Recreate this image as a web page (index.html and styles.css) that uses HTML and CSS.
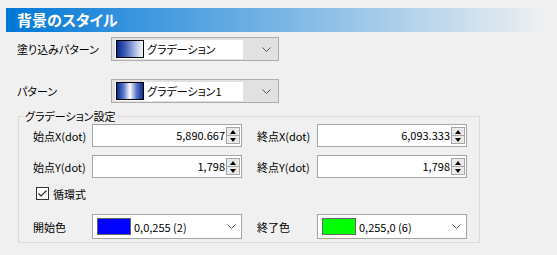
FILE: index.html
```html
<!DOCTYPE html>
<html lang="ja">
<head>
<meta charset="utf-8">
<link rel="stylesheet" href="styles.css">
</head>
<body>
<div class="panel">
  <div class="header">背景のスタイル</div>

  <div class="row r1">
    <span class="lbl top">塗り込みパターン</span>
    <div class="combo gray">
      <div class="item"><span class="sw grad1"></span><span class="itext">グラデーション</span></div>
      <svg class="chev" width="9" height="5" viewBox="0 0 9 5"><polyline points="0.5,0.5 4.5,4.5 8.5,0.5" fill="none" stroke="#555" stroke-width="1"/></svg>
    </div>
  </div>

  <div class="row r2">
    <span class="lbl top">パターン</span>
    <div class="combo gray">
      <div class="item"><span class="sw grad2"></span><span class="itext">グラデーション1</span></div>
      <svg class="chev" width="9" height="5" viewBox="0 0 9 5"><polyline points="0.5,0.5 4.5,4.5 8.5,0.5" fill="none" stroke="#555" stroke-width="1"/></svg>
    </div>
  </div>

  <div class="group">
    <div class="legend">グラデーション設定</div>

    <div class="grow gx">
      <span class="glbl">始点X(dot)</span>
      <div class="num"><span class="val">5,890.667</span><div class="spin"><span class="btn"><i class="up"></i></span><span class="btn"><i class="dn"></i></span></div></div>
      <span class="glbl right">終点X(dot)</span>
      <div class="num"><span class="val">6,093.333</span><div class="spin"><span class="btn"><i class="up"></i></span><span class="btn"><i class="dn"></i></span></div></div>
    </div>

    <div class="grow gy">
      <span class="glbl">始点Y(dot)</span>
      <div class="num"><span class="val">1,798</span><div class="spin"><span class="btn"><i class="up"></i></span><span class="btn"><i class="dn"></i></span></div></div>
      <span class="glbl right">終点Y(dot)</span>
      <div class="num"><span class="val">1,798</span><div class="spin"><span class="btn"><i class="up"></i></span><span class="btn"><i class="dn"></i></span></div></div>
    </div>

    <div class="chkrow">
      <span class="box"><svg width="11" height="11" viewBox="0 0 11 11"><polyline points="1.5,5.5 4,8 9.5,2.5" fill="none" stroke="#222" stroke-width="1.1"/></svg></span>
      <span class="chklbl">循環式</span>
    </div>

    <div class="grow gc">
      <span class="glbl">開始色</span>
      <div class="ccombo">
        <span class="csw blue"></span><span class="ctext">0,0,255 (2)</span>
        <svg class="chev" width="9" height="5" viewBox="0 0 9 5"><polyline points="0.5,0.5 4.5,4.5 8.5,0.5" fill="none" stroke="#555" stroke-width="1"/></svg>
      </div>
      <span class="glbl right">終了色</span>
      <div class="ccombo">
        <span class="csw green"></span><span class="ctext">0,255,0 (6)</span>
        <svg class="chev" width="9" height="5" viewBox="0 0 9 5"><polyline points="0.5,0.5 4.5,4.5 8.5,0.5" fill="none" stroke="#555" stroke-width="1"/></svg>
      </div>
    </div>
  </div>
</div>
</body>
</html>
```

FILE: styles.css
```css
* { box-sizing: border-box; }
html, body {
  margin: 0;
  padding: 0;
  background: #f0f0f0;
  width: 557px;
  height: 255px;
  overflow: hidden;
}
body {
  font-family: "Noto Sans CJK JP", "Noto Sans", sans-serif;
  font-size: 11px;
  color: #000;
  font-feature-settings: "palt";
}
.panel {
  padding: 8px 0 0 6px;
}
.header {
  width: 540px;
  height: 24px;
  background: linear-gradient(to right, #0078d7 0%, #f0f0f0 100%);
  color: #fff;
  font-weight: bold;
  font-size: 15px;
  line-height: 24px;
  padding-left: 11px;
}
.row {
  display: flex;
  align-items: center;
  height: 24px;
}
.r1 { margin-top: 5px; }
.r2 { margin-top: 18px; }
.lbl.top {
  width: 105px;
  padding-left: 11px;
}
.combo {
  width: 168px;
  height: 24px;
  border: 1px solid #adadad;
  background: #e1e1e1;
  display: flex;
  align-items: center;
  padding: 2px 0 2px 3px;
}
.item {
  width: 128px;
  height: 19px;
  background: #fff;
  display: flex;
  align-items: center;
  padding-left: 1px;
}
.sw {
  width: 28px;
  height: 18px;
  border: 1px solid #000;
  flex: none;
}
.grad1 {
  background: linear-gradient(to right, #0a2a8f 0%, #3a5cb8 30%, #c9d4ec 80%, #f2f4fa 100%);
}
.grad2 {
  background: linear-gradient(to right, #0a2a8f 0%, #5a78c4 25%, #ffffff 50%, #5a78c4 75%, #0a2a8f 100%);
}
.itext {
  margin-left: 3px;
}
.chev {
  margin-left: auto;
  margin-right: 7px;
}
.group {
  margin: 13px 0 0 12px;
  width: 462px;
  height: 127px;
  border: 1px solid #dcdcdc;
  padding: 0 0 0 14px;
}
.legend {
  margin: -8px 0 0 -10px;
  padding: 0 2px;
  background: #f0f0f0;
  width: fit-content;
  height: 15px;
  line-height: 15px;
}
.grow {
  display: flex;
  align-items: center;
}
.gx { height: 23px; margin-top: 0; }
.gy { height: 23px; margin-top: 8px; }
.gc { height: 25px; margin-top: 14px; }
.glbl {
  width: 59px;
  flex: none;
}
.glbl.right {
  width: 60px;
  margin-left: 15px;
}
.num {
  width: 150px;
  height: 23px;
  border: 1px solid #a5a5a5;
  background: #fff;
  display: flex;
  align-items: stretch;
  padding: 2px 1px 2px 0;
}
.val {
  flex: 1;
  text-align: right;
  line-height: 17px;
  padding-right: 1px;
}
.spin {
  width: 14px;
  display: flex;
  flex-direction: column;
  border: 1px solid #a5a5a5;
}
.btn {
  flex: 1;
  background: #eaeaea;
  display: flex;
  align-items: center;
  justify-content: center;
}
.btn + .btn { border-top: 1px solid #a5a5a5; }
.up {
  width: 0; height: 0;
  border-left: 3.5px solid transparent;
  border-right: 3.5px solid transparent;
  border-bottom: 4px solid #000;
}
.dn {
  width: 0; height: 0;
  border-left: 3.5px solid transparent;
  border-right: 3.5px solid transparent;
  border-top: 4px solid #000;
}
.chkrow {
  display: flex;
  align-items: center;
  height: 13px;
  margin-top: 9px;
  padding-left: 3px;
}
.box {
  width: 13px;
  height: 13px;
  border: 1px solid #333;
  background: #fff;
  display: flex;
  align-items: center;
  justify-content: center;
}
.chklbl {
  margin-left: 4px;
}
.ccombo {
  width: 150px;
  height: 25px;
  border: 1px solid #a5a5a5;
  background: #fff;
  display: flex;
  align-items: center;
  padding-left: 4px;
}
.csw {
  width: 34px;
  height: 17px;
  border: 1px solid #666;
  flex: none;
}
.blue { background: #0000ff; }
.green { background: #00ff00; }
.ctext { margin-left: 3px; }
.ccombo .chev { margin-right: 5px; }
```
